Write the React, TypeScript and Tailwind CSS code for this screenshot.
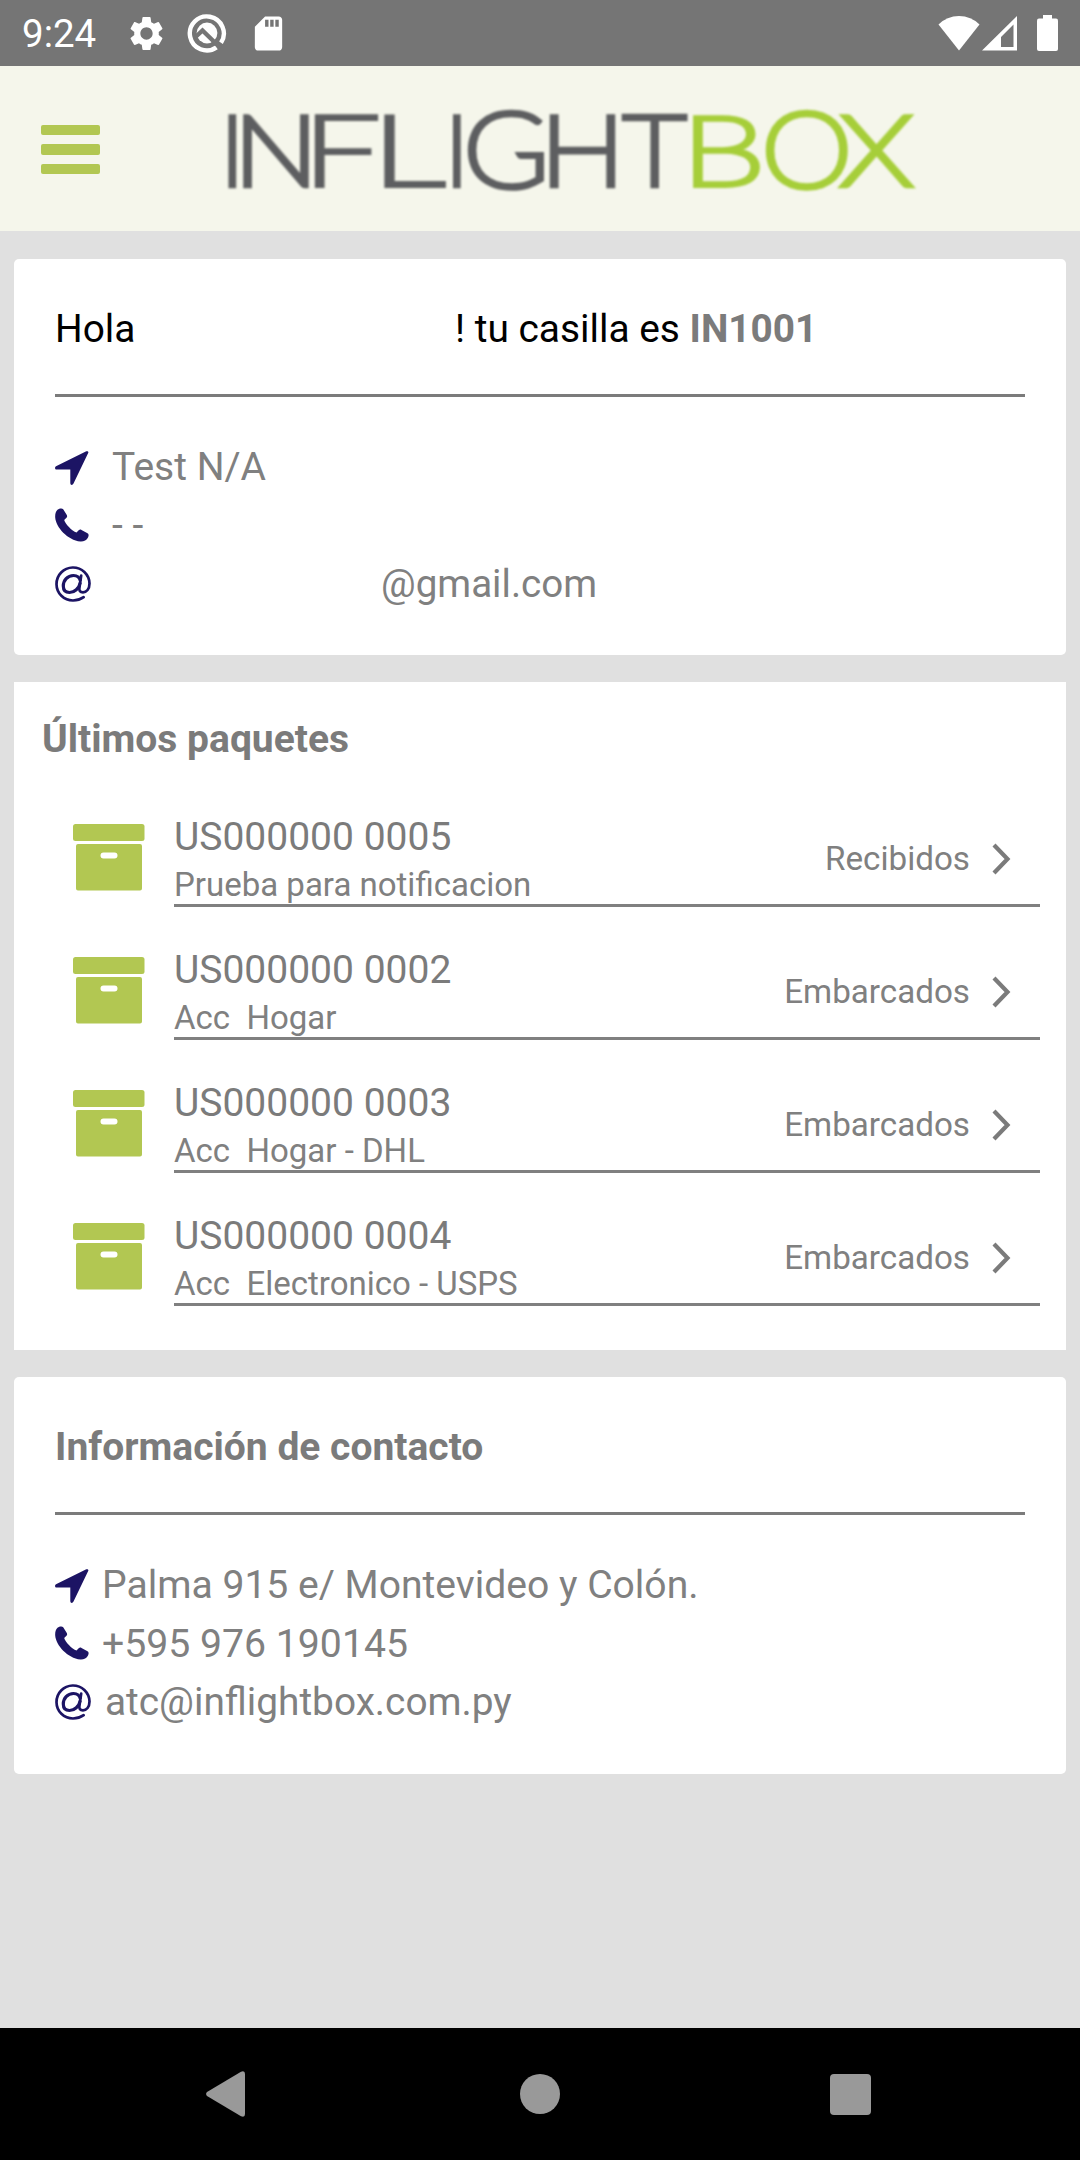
import type { ReactNode } from 'react';
import { MdSettings, MdSdCard } from 'react-icons/md';

function StatusBar() {
  return (
    <header className="flex h-[66px] items-center bg-[#757575] pl-[22px] pr-[22px] text-white">
      <span className="w-[104px] pt-[2px] text-[38.5px] leading-[46px]">9:24</span>
      <MdSettings className="size-[41px]" />
      <svg className="ml-5 size-[40px]" viewBox="0 0 40 40" fill="none">
        <path d="M29.5 34.4A17 17 0 1 1 34 29.8" stroke="#fff" strokeWidth="4.4" />
        <circle cx="20" cy="20" r="10.4" fill="#fff" />
        <path d="M8 24.5L15.5 17.5L33.5 35" stroke="#757575" strokeWidth="4.4" />
      </svg>
      <MdSdCard className="ml-[21px] size-[41px]" />
      <div className="ml-auto flex items-center">
        <svg className="h-[36px] w-[42px]" viewBox="0 0 42 36" fill="#fff">
          <path d="M21 35.5L0.5 9.5Q9 1 21 1T41.500 9.500Z" />
        </svg>
        <svg className="ml-[2px] h-[36px] w-[35px]" viewBox="0 0 35 36">
          <path fill="#fff" fillRule="evenodd" d="M35 1V35.500H0ZM31.500 9.500L19 22V32H31.500Z" />
        </svg>
        <svg className="ml-[20px] h-[36px] w-[21px]" viewBox="0 0 21 36" fill="#fff">
          <rect x="6" width="9" height="8" />
          <rect y="3.500" width="21" height="32.500" rx="2" />
        </svg>
      </div>
    </header>
  );
}

function Logo() {
  return (
    <svg
      className="ml-[120px] h-[100px] w-[700px] overflow-visible blur-[1.1px]"
      viewBox="220 100 700 100"
      fontFamily="Lato, sans-serif"
      fontWeight="100"
      fontSize="97"
      strokeWidth="6.5"
    >
      <text y="185.700" fill="#5d5e60" stroke="#5d5e60">
        <tspan x="220.500">I</tspan>
        <tspan x="233.900" textLength="84" lengthAdjust="spacingAndGlyphs">N</tspan>
        <tspan x="303.300" strokeWidth="5.8" textLength="76.100" lengthAdjust="spacingAndGlyphs">F</tspan>
        <tspan x="372.100" strokeWidth="5.8" textLength="71.800" lengthAdjust="spacingAndGlyphs">L</tspan>
        <tspan x="445">I</tspan>
        <tspan x="463.500" y="188" fontSize="105" textLength="85.300" lengthAdjust="spacingAndGlyphs">G</tspan>
        <tspan x="540.400" y="185.700" textLength="84" lengthAdjust="spacingAndGlyphs">H</tspan>
        <tspan x="623.700" textLength="61.700" lengthAdjust="spacingAndGlyphs">T</tspan>
      </text>
      <text y="185.700" fill="#a6ce39" stroke="#a6ce39">
        <tspan x="681.500" strokeWidth="5.800" textLength="83.500" lengthAdjust="spacingAndGlyphs">B</tspan>
        <tspan x="761.500" y="188" fontSize="105" textLength="90.500" lengthAdjust="spacingAndGlyphs">O</tspan>
        <tspan x="841.600" y="185.700" textLength="70" lengthAdjust="spacingAndGlyphs">X</tspan>
      </text>
    </svg>
  );
}

function AppBar() {
  return (
    <div className="flex h-[165px] items-center bg-[#f5f6eb] pl-[41px]">
      <button aria-label="Menú" className="mt-[2px] flex w-[59px] flex-col gap-[9.500px]">
        <span className="h-[10.200px] rounded-[2px] bg-[#b2c752]" />
        <span className="h-[10.200px] rounded-[2px] bg-[#b2c752]" />
        <span className="h-[10.200px] rounded-[2px] bg-[#b2c752]" />
      </button>
      <Logo />
    </div>
  );
}

function Arrow() {
  return (
    <svg className="mt-1 size-[34px]" viewBox="0 0 34 34" fill="#1c1464">
      <path d="M31.300 .3L1 15.200C-.5 16-.2 18.500 1.400 18.500H15.300V32C15.300 34.400 17.600 34.500 18.500 32.600L33.300 1.800C33.700 .6 32.600 -.2 31.300 .3Z" />
    </svg>
  );
}

function Phone() {
  return (
    <svg className="size-[34px]" viewBox="0 0 34 34" fill="#1c1464">
      <path d="M2.500 1.800C4.500 .2 7.200 -.1 8.200 1.300L11.800 7C12.500 8.300 12.100 9.300 11.200 10.100L9.200 12C10 15.500 17 23.300 21.500 24.500L23.700 22.300C24.500 21.500 25.500 21.300 26.500 21.900L32.500 25.300C33.900 26.100 33.900 27.500 33 29.500C31.800 32.300 28.500 33.800 25.500 33.600C12.500 32 1 19.500 .2 9.500C0 6 .8 3.200 2.500 1.800Z" />
    </svg>
  );
}

function At() {
  return (
    <svg className="mt-[2px] size-[36px]" viewBox="0 0 36 36" fill="none" stroke="#1c1464">
      <path
        strokeWidth="2.700"
        strokeLinecap="round"
        d="M28.700 31.200Q24 34.500 18 34.500A16.500 16.500 0 1 1 34.500 17.500C34.500 23 31.500 26.300 28 26.300C25 26.300 24 24.500 24.400 22L26.200 9.500"
      />
      <path
        strokeWidth="3.200"
        d="M25.500 15C24.500 11 22 9.500 18.500 9.500C12.500 9.500 8.300 14.500 8.300 20C8.300 24.500 11 26.500 14.500 26.500C19.500 26.500 24 22.500 25.300 16.500"
      />
    </svg>
  );
}

function InfoRow({ icon, children }: { icon: ReactNode; children: ReactNode }) {
  return (
    <div className="flex h-[58.500px] items-center">
      <span className="flex w-[46px] shrink-0">{icon}</span>
      {children}
    </div>
  );
}

function InfoCard({ title, children }: { title: ReactNode; children: ReactNode }) {
  return (
    <section className="h-[396px] rounded-[5px] bg-white px-[41px] pt-[47px] last:h-[397px]">
      <div className="flex h-[46px] whitespace-pre text-[39px] leading-[46px]">{title}</div>
      <div className="mb-10 mt-[42px] h-[3px] bg-[#7b7b7b]" />
      {children}
    </section>
  );
}

function BoxIcon() {
  return (
    <svg className="h-[67px] w-[72px]" viewBox="0 0 72 67" fill="#b2c752">
      <rect width="71.500" height="17" rx="2.500" />
      <path
        fillRule="evenodd"
        d="M5 20H67Q69 20 69 22V64.500Q69 66.500 67 66.500H5Q3 66.500 3 64.500V22Q3 20 5 20ZM30.500 28.500A3 3 0 0 0 30.500 34.500H41.500A3 3 0 0 0 41.500 28.500Z"
      />
    </svg>
  );
}

const packages = [
  { code: 'US000000 0005', detail: 'Prueba para notificacion', status: 'Recibidos' },
  { code: 'US000000 0002', detail: 'Acc  Hogar', status: 'Embarcados' },
  { code: 'US000000 0003', detail: 'Acc  Hogar - DHL', status: 'Embarcados' },
  { code: 'US000000 0004', detail: 'Acc  Electronico - USPS', status: 'Embarcados' },
];

function PackageRow({ code, detail, status }: (typeof packages)[number]) {
  return (
    <li className="flex h-[133px] items-start pl-[58.500px] pr-[26px]">
      <div className="mt-[10px]">
        <BoxIcon />
      </div>
      <div className="ml-[29.500px] flex h-[93px] flex-1 items-center border-b-[3px] border-[#808080] text-[#7b7b7b]">
        <div className="h-full flex-1 whitespace-pre">
          <div className="h-[51px] text-[39px] leading-[46px]">{code}</div>
          <div className="text-[33px] leading-[39px] text-[#808080]">{detail}</div>
        </div>
        <span className="pb-[2px] text-[33.200px] leading-[39px] text-[#808080]">{status}</span>
        <svg className="ml-[22px] mr-[29px] h-[32px] w-[19px]" viewBox="0 0 19 32" fill="none">
          <path d="M2 2L15.500 16L2 30" stroke="#7b7b7b" strokeWidth="4.200" />
        </svg>
      </div>
    </li>
  );
}

function NavBar() {
  return (
    <nav className="flex h-[132px] items-center bg-black pl-[206px]">
      <svg className="h-[46px] w-[39px]" viewBox="0 0 39 46" fill="#999">
        <path d="M1 21L35 .8Q39 -.8 39 3V43Q39 46.800 35 45.200L1 25Q-.8 23 1 21Z" />
      </svg>
      <span className="ml-[275px] size-[40px] rounded-full bg-[#999]" />
      <span className="ml-[270px] size-[41px] rounded-[4px] bg-[#999]" />
    </nav>
  );
}

export default function App() {
  return (
    <div className="flex h-[2160px] w-[1080px] flex-col overflow-hidden bg-[#e0e0e0] font-[Roboto,sans-serif] text-[#808080]">
      <StatusBar />
      <AppBar />
      <main className="flex flex-1 flex-col gap-[27px] px-[14px] pt-[28px]">
        <InfoCard
          title={
            <>
              <span className="w-[400px] text-[38.800px] text-black">Hola</span>
              <span className="text-[38.900px] text-black">! tu casilla es </span>
              <b className="text-[38.800px] text-[#7b7b7b]">IN1001</b>
            </>
          }
        >
          <InfoRow icon={<Arrow />}>
            <span className="ml-[11px] pt-[2px] text-[39px]">Test N/A</span>
          </InfoRow>
          <InfoRow icon={<Phone />}>
            <span className="ml-[11px] text-[39px]">- -</span>
          </InfoRow>
          <InfoRow icon={<At />}>
            <span className="ml-[280px] pt-[2px] text-[38.600px]">@gmail.com</span>
          </InfoRow>
        </InfoCard>

        <section className="h-[668px] bg-white">
          <h2 className="pl-[28px] pt-[34px] text-[39px] font-bold leading-[46px] text-[#7b7b7b]">Últimos paquetes</h2>
          <ul className="mt-[52px]">
            {packages.map((p) => (
              <PackageRow key={p.code} {...p} />
            ))}
          </ul>
        </section>

        <InfoCard title={<b className="text-[#7b7b7b]">Información de contacto</b>}>
          <InfoRow icon={<Arrow />}>
            <span className="ml-px pt-[2px] text-[39.100px]">Palma 915 e/ Montevideo y Colón.</span>
          </InfoRow>
          <InfoRow icon={<Phone />}>
            <span className="ml-px pt-[3px] text-[39.200px]">+595 976 190145</span>
          </InfoRow>
          <InfoRow icon={<At />}>
            <span className="ml-1 pt-[2px] text-[38.800px]">atc@inflightbox.com.py</span>
          </InfoRow>
        </InfoCard>
      </main>
      <NavBar />
    </div>
  );
}
